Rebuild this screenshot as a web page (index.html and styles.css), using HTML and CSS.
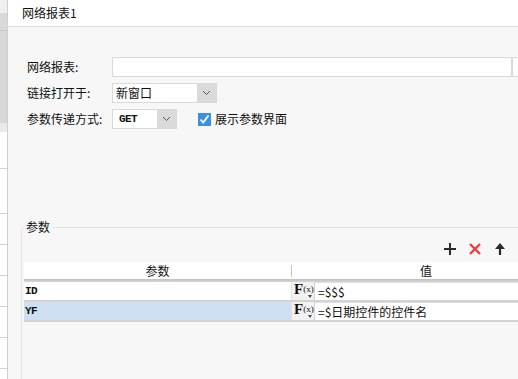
FILE: index.html
```html
<!DOCTYPE html>
<html lang="zh">
<head>
    <meta charset="UTF-8">
    <meta name="viewport" content="width=device-width, initial-scale=1.0">
    <title>网络报表</title>
    <link rel="stylesheet" href="styles.css">
</head>
<body>
    <div class="window">
        <!-- Left edge of the neighbouring pane -->
        <div class="side">
            <div class="side-top"></div>
            <div class="side-gray"></div>
            <div class="side-band"></div>
            <div class="side-row first"></div>
            <div class="side-row tall"></div>
            <div class="side-row"></div>
            <div class="side-row"></div>
            <div class="side-row"></div>
            <div class="side-row"></div>
            <div class="side-row"></div>
        </div>

        <div class="main">
            <div class="title">网络报表1</div>

            <div class="panel">
                <div class="form">
                    <div class="form-row">
                        <label class="label">网络报表:</label>
                        <div class="input wide"></div>
                        <div class="input-end"></div>
                    </div>
                    <div class="form-row">
                        <label class="label">链接打开于:</label>
                        <div class="select window-select">
                            <span class="select-text">新窗口</span>
                            <span class="select-btn">
                                <svg width="9" height="6" viewBox="0 0 9 6"><path d="M1 1 L4.5 4.5 L8 1" fill="none" stroke="#555" stroke-width="1"/></svg>
                            </span>
                        </div>
                    </div>
                    <div class="form-row">
                        <label class="label">参数传递方式:</label>
                        <div class="select method-select">
                            <span class="select-text mono">GET</span>
                            <span class="select-btn">
                                <svg width="9" height="6" viewBox="0 0 9 6"><path d="M1 1 L4.5 4.5 L8 1" fill="none" stroke="#555" stroke-width="1"/></svg>
                            </span>
                        </div>
                        <span class="checkbox">
                            <svg width="13" height="13" viewBox="0 0 13 13"><path d="M2.5 6.5 L5.2 9.5 L10.5 2.5" fill="none" stroke="#fff" stroke-width="1.8"/></svg>
                        </span>
                        <span class="check-label">展示参数界面</span>
                    </div>
                </div>

                <fieldset class="group">
                    <legend>参数</legend>
                    <div class="toolbar">
                        <svg width="14" height="14" viewBox="0 0 14 14"><path d="M7 1 V13 M1 7 H13" stroke="#2b2b2b" stroke-width="2"/></svg>
                        <svg width="14" height="14" viewBox="0 0 14 14"><path d="M2 2 L12 12 M12 2 L2 12" stroke="#f23c3c" stroke-width="2.4"/></svg>
                        <svg width="14" height="14" viewBox="0 0 14 14"><path d="M7 1 L12 7 H8.1 V13 H5.9 V7 H2 Z" fill="#2b2b2b"/></svg>
                    </div>

                    <div class="table">
                        <div class="table-head">
                            <div class="head-cell">参数</div>
                            <div class="head-cell value-head">值</div>
                        </div>
                        <div class="table-row">
                            <div class="cell name mono">ID</div>
                            <div class="fx"><b>F</b><span class="fx-arg">(x)<i></i></span></div>
                            <div class="cell value">=$$$</div>
                        </div>
                        <div class="table-row selected">
                            <div class="cell name mono">YF</div>
                            <div class="fx"><b>F</b><span class="fx-arg">(x)<i></i></span></div>
                            <div class="cell value">=$日期控件的控件名</div>
                        </div>
                    </div>
                </fieldset>
            </div>
        </div>
    </div>
</body>
</html>
```

FILE: styles.css
```css
/* General Reset */
* {
    margin: 0;
    padding: 0;
    box-sizing: border-box;
}

body {
    width: 518px;
    height: 379px;
    overflow: hidden;
    font-family: "Noto Sans CJK SC", "Noto Sans", sans-serif;
    font-size: 12px;
    line-height: 14px;
    color: #111;
    background: #f7f7f7;
}

.window {
    display: flex;
    height: 379px;
}

/* Left pane strip */
.side {
    width: 8px;
    flex: none;
    display: flex;
    flex-direction: column;
    background: #fff;
    border-right: 1px solid #cfcfcf;
}

.side-top {
    height: 13px;
    background: #efefef;
}

.side-gray {
    height: 110px;
    background: #d7d7d7;
    border-top: 17px solid #d9d9d9;
    box-shadow: inset 0 1px 0 #c6c6c6;
}

.side-band {
    height: 9px;
    background: #ede8eb;
}

.side-row {
    height: 31px;
    border-bottom: 1px solid #d2d2d2;
}

.side-row.first {
    height: 37px;
}

.side-row.tall {
    height: 45px;
}

/* Main area */
.main {
    flex: 1;
    min-width: 0;
    display: flex;
    flex-direction: column;
    overflow: hidden;
}

.title {
    height: 27px;
    line-height: 26px;
    padding-left: 14px;
    background: #fff;
    border-bottom: 1px solid #dcdcdc;
}

.panel {
    flex: 1;
    padding: 30px 0 0 19px;
    overflow: hidden;
}

/* Form */
.form-row {
    display: flex;
    align-items: center;
    height: 20px;
    margin-bottom: 6px;
}

.form-row:last-child {
    margin-bottom: 0;
}

.label {
    width: 85px;
    flex: none;
}

.input {
    height: 20px;
    background: #fff;
    border: 1px solid #d9d9d9;
}

.input.wide {
    width: 401px;
    flex: none;
    border-right-width: 2px;
}

.input-end {
    flex: 1;
    height: 20px;
    background: #fff;
    border-top: 1px solid #d9d9d9;
    border-bottom: 1px solid #d9d9d9;
}

.select {
    display: flex;
    height: 20px;
    background: #fff;
    border: 1px solid #d9d9d9;
}

.window-select {
    width: 105px;
}

.method-select {
    width: 65px;
}

.select-text {
    flex: 1;
    padding-left: 3px;
    line-height: 18px;
}

.select-btn {
    width: 19px;
    display: flex;
    align-items: center;
    justify-content: center;
    background: #dadada;
}

.mono {
    font-family: "Liberation Mono", monospace;
    font-weight: bold;
    font-size: 11px;
    letter-spacing: -0.6px;
}

.method-select .select-text {
    padding-left: 6px;
}

.checkbox {
    width: 13px;
    height: 13px;
    margin-left: 21px;
    display: flex;
    background: #3b8fe7;
}

.check-label {
    margin-left: 4px;
}

/* Group box */
.group {
    width: 541px;
    height: 200px;
    margin: 91px 0 0 -6px;
    padding: 0 0 0 2px;
    border: 1px solid #e4e4e4;
    border-radius: 4px 0 0 0;
}

.group legend {
    padding: 0 2px;
    margin-left: 0;
}

.toolbar {
    height: 28px;
    display: flex;
    align-items: center;
    justify-content: flex-end;
    gap: 11px;
    padding: 1px 54px 0 0;
}

/* Table */
.table {
    width: 536px;
}

.table-head {
    display: grid;
    grid-template-columns: 267px 269px;
    height: 20px;
    background: linear-gradient(to bottom, #fff 17px, #bfbfbf 17px, #d6d6d6 20px);
}

.head-cell {
    height: 12px;
    margin-top: 3px;
    line-height: 12px;
    text-align: center;
}

.value-head {
    border-left: 1px solid #c9c3b5;
}

.table-row {
    display: grid;
    grid-template-columns: 267px 24px 1fr;
    height: 20px;
    border-bottom: 2px solid #d3d3d3;
    background: #fff;
}

.cell {
    line-height: 18px;
}

.name {
    padding-left: 1px;
}

.selected .name {
    background: #cddff0;
}

.fx {
    display: flex;
    align-items: flex-start;
    padding-left: 2px;
    background: #f2f2f2;
    border-left: 1px solid #e2e2e2;
    border-right: 1px solid #d6d6d6;
    font-family: "Liberation Serif", serif;
    color: #111;
}

.fx b {
    font-size: 15px;
    line-height: 15px;
}

.fx-arg {
    display: flex;
    flex-direction: column;
    align-items: center;
    font-size: 9px;
    line-height: 10px;
    padding-top: 2px;
}

.fx-arg i {
    width: 0;
    height: 0;
    margin-top: 1px;
    margin-left: 4px;
    border-left: 2.5px solid transparent;
    border-right: 2.5px solid transparent;
    border-top: 3px solid #444;
}

.value {
    padding-left: 3px;
    border-top: 1px solid #e0e0e0;
    line-height: 17px;
}
```
